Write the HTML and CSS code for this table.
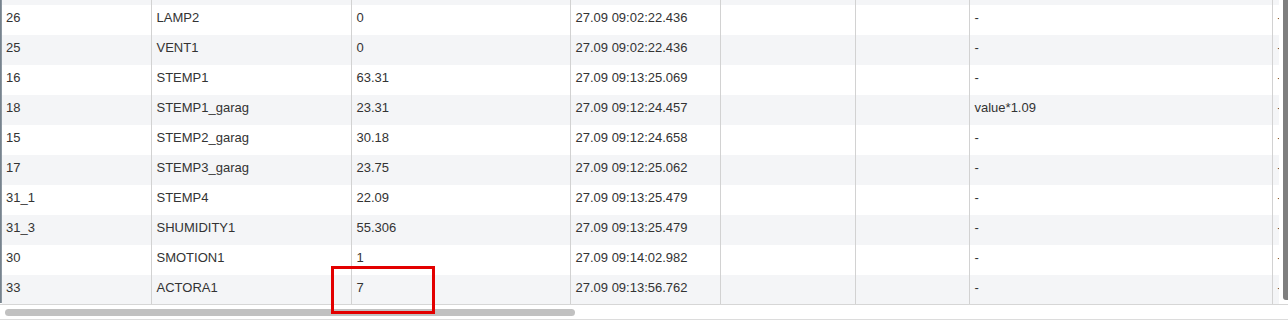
FILE: index.html
```html
<!DOCTYPE html>
<html>
<head>
<meta charset="utf-8">
<link rel="stylesheet" href="styles.css">
</head>
<body>
<div class="panel">
  <div class="viewport">
    <div class="edge"></div>
    <div class="clip">
      <table class="grid">
        <colgroup>
          <col class="c1"><col class="c2"><col class="c3"><col class="c4"><col class="c5"><col class="c6"><col class="c7"><col class="c8">
        </colgroup>
        <tbody>
          <tr class="stub alt"><td></td><td></td><td></td><td></td><td></td><td></td><td></td><td></td></tr>
          <tr><td>26</td><td>LAMP2</td><td>0</td><td>27.09 09:02:22.436</td><td></td><td></td><td>-</td><td>-</td></tr>
          <tr class="alt"><td>25</td><td>VENT1</td><td>0</td><td>27.09 09:02:22.436</td><td></td><td></td><td>-</td><td>-</td></tr>
          <tr><td>16</td><td>STEMP1</td><td>63.31</td><td>27.09 09:13:25.069</td><td></td><td></td><td>-</td><td>-</td></tr>
          <tr class="alt"><td>18</td><td>STEMP1_garag</td><td>23.31</td><td>27.09 09:12:24.457</td><td></td><td></td><td>value*1.09</td><td>-</td></tr>
          <tr><td>15</td><td>STEMP2_garag</td><td>30.18</td><td>27.09 09:12:24.658</td><td></td><td></td><td>-</td><td>-</td></tr>
          <tr class="alt"><td>17</td><td>STEMP3_garag</td><td>23.75</td><td>27.09 09:12:25.062</td><td></td><td></td><td>-</td><td>-</td></tr>
          <tr><td>31_1</td><td>STEMP4</td><td>22.09</td><td>27.09 09:13:25.479</td><td></td><td></td><td>-</td><td>-</td></tr>
          <tr class="alt"><td>31_3</td><td>SHUMIDITY1</td><td>55.306</td><td>27.09 09:13:25.479</td><td></td><td></td><td>-</td><td>-</td></tr>
          <tr><td>30</td><td>SMOTION1</td><td>1</td><td>27.09 09:14:02.982</td><td></td><td></td><td>-</td><td>-</td></tr>
          <tr class="alt"><td>33</td><td>ACTORA1</td><td>7</td><td>27.09 09:13:56.762</td><td></td><td></td><td>-</td><td>-</td></tr>
        </tbody>
      </table>
    </div>
    <div class="vgap"></div>
    <div class="vthumb"></div>
  </div>
  <div class="hscroll"><div class="hthumb"></div></div>
</div>
<div class="highlight"></div>
</body>
</html>
```
FILE: styles.css
```css
html, body {
  margin: 0;
  padding: 0;
  background: #ffffff;
}
body {
  width: 1288px;
  height: 321px;
  overflow: hidden;
  position: relative;
  font-family: "Liberation Sans", Arial, sans-serif;
  font-size: 13px;
  color: #333333;
}
.panel {
  display: flex;
  flex-direction: column;
  width: 1288px;
}
.viewport {
  display: flex;
  height: 305px;
  box-sizing: border-box;
  border-bottom: 1px solid #d6d6d6;
  overflow: hidden;
}
.edge {
  width: 2px;
  flex: none;
  height: 303px;
  background: linear-gradient(to right, #6c7883, #97a2ab);
}
.clip {
  width: 1277px;
  flex: none;
  overflow: hidden;
}
.vgap {
  width: 4px;
  flex: none;
}
.vthumb {
  width: 5px;
  flex: none;
  height: 300px;
  background: #7f7f7f;
  border-bottom-left-radius: 3px;
}
.grid {
  table-layout: fixed;
  border-collapse: collapse;
  width: 1470px;
}
.c1 { width: 149px; }
.c2 { width: 200px; }
.c3 { width: 219px; }
.c4 { width: 150px; }
.c5 { width: 135px; }
.c6 { width: 114px; }
.c7 { width: 303px; }
.c8 { width: 200px; }
.grid td {
  height: 30px;
  box-sizing: border-box;
  padding: 5px 4px 10px 4px;
  line-height: 15px;
  vertical-align: top;
  border-right: 1px solid #d2d2d2;
  white-space: nowrap;
  overflow: hidden;
}
.grid td + td {
  padding-left: 5px;
}
.grid tr.alt td {
  background: #f4f5f7;
}
.grid tr.stub td {
  height: 5px;
  padding: 0;
}
.hscroll {
  height: 15px;
  box-sizing: border-box;
  border-bottom: 1px solid #dcdcdc;
  padding: 4px 0 0 5px;
}
.hthumb {
  width: 570px;
  height: 7px;
  border-radius: 4px;
  background: #c1c1c1;
}
.highlight {
  position: absolute;
  left: 331px;
  top: 266px;
  width: 104px;
  height: 48px;
  box-sizing: border-box;
  border: 3px solid #e30000;
}
```
